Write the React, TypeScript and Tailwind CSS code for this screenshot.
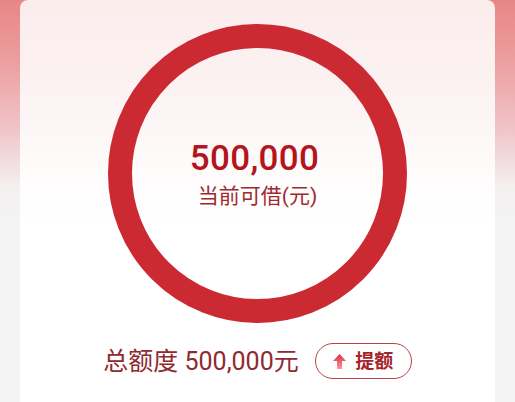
import React from "react";

export default function App() {
  return (
    <div
      className="w-[515px] h-[402px] overflow-hidden px-[20px] bg-[linear-gradient(180deg,#e88686_0%,#ec9e9e_15%,#f0c4c8_32%,#f3efef_46%,#f4f4f4_55%,#f4f4f4_100%)]"
      style={{ fontFamily: 'Roboto, "Noto Sans CJK SC", sans-serif' }}
    >
      <div className="h-full flex flex-col items-center rounded-t-[8px] bg-[linear-gradient(180deg,#fbecec_0%,#fcf3f3_25%,#fefbfb_42%,#ffffff_55%,#ffffff_100%)]">
        <div className="mt-[24px] w-[299px] h-[299px] shrink-0 rounded-full border-[24px] border-[#cc2a33] flex flex-col items-center justify-center">
          <div className="text-[35px] leading-none text-[#b5141d] font-medium tracking-[0.3px] mr-[6px]">500,000</div>
          <div className="mt-[10px] text-[21px] leading-none text-[#a02a30]">当前可借(元)</div>
        </div>
        <div className="mt-[20px] flex items-center gap-[16px]">
          <div className="text-[25px] leading-none text-[#8e2a30]">总额度 500,000元</div>
          <div className="w-[97px] h-[36px] rounded-full border-[1.5px] border-[#b8404a] flex items-center justify-center gap-[9px]">
            <svg width="13" height="15" viewBox="0 0 13 15">
              <defs>
                <linearGradient id="ag" x1="0" y1="0" x2="0" y2="1">
                  <stop offset="0" stopColor="#e0303a" />
                  <stop offset="1" stopColor="#f29a9e" />
                </linearGradient>
              </defs>
              <path d="M6.5 0 L13 7 L9 7 L9 15 L4 15 L4 7 L0 7 Z" fill="url(#ag)" />
            </svg>
            <span className="text-[19px] leading-none font-bold text-[#a3242b]">提额</span>
          </div>
        </div>
      </div>
    </div>
  );
}
